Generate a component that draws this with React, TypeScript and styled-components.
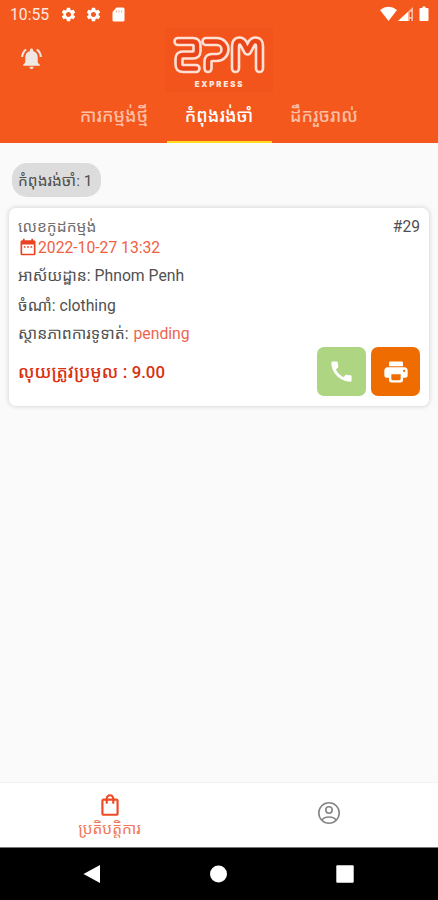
import React from "react";
import styled, { createGlobalStyle, css } from "styled-components";
import {
  MdSettings,
  MdNotificationsActive,
  MdCall,
  MdDateRange,
  MdOutlineShoppingBag,
} from "react-icons/md";

const Global = createGlobalStyle`
  * { box-sizing: border-box; }
  body { margin: 0; background: #fafafa; }
  svg { display: block; flex: none; }
`;

const Screen = styled.div`
  width: 438px;
  height: 900px;
  display: flex;
  flex-direction: column;
  background: #fafafa;
  color: #505050;
  font: 400 15.75px/20px Roboto, "Noto Sans Khmer", "Khmer OS", sans-serif;
  white-space: nowrap;
  overflow: hidden;
`;

const Header = styled.header`
  height: 143px;
  flex: none;
  display: flex;
  flex-direction: column;
  background: #f4581c;
  color: #fff;
`;

const StatusBar = styled.div`
  height: 28px;
  display: flex;
  align-items: center;
  padding: 0 7px 0 10px;
`;

const Clock = styled.span`
  width: 50px;
  padding-top: 1px;
  font-size: 15.7px;
  color: #ffe9e0;
`;

const StatusIcons = styled.div<{ $end?: boolean }>`
  display: flex;
  align-items: center;
  gap: 8px;
  ${(p) => p.$end && css`
    margin-left: auto;
    gap: 0;
  `}
`;

const TitleBar = styled.div`
  height: 64px;
  display: grid;
  grid-template-columns: 165px 108px 1fr;
`;

const BellButton = styled.button`
  border: 0;
  padding: 18px 0 0 19px;
  background: none;
  color: #efe7e4;
  display: flex;
  align-items: flex-start;
`;

const Logo = styled.div`
  height: 64px;
  display: flex;
  flex-direction: column;
  align-items: center;
  background: #f2541b;
`;

const LogoCaption = styled.span`
  margin-top: 2px;
  padding-left: 1px;
  font: 900 7.8px/9px Inter, sans-serif;
  letter-spacing: 1.9px;
  color: #ffe9df;
`;

const Tabs = styled.nav`
  height: 51px;
  display: flex;
  padding-left: 62px;
`;

const Tab = styled.a<{ $active?: boolean }>`
  width: 105px;
  height: 51px;
  padding: 14px 1px 0 0;
  text-align: center;
  font-weight: 500;
  font-size: 17.8px;
  color: ${(p) => (p.$active ? "#fff" : "#fcbfa6")};
  border-bottom: 2px solid ${(p) => (p.$active ? "#ffdc1e" : "transparent")};
`;

const Content = styled.main`
  flex: 1;
  padding: 20px 9px 0;
`;

const Chip = styled.div`
  width: 89px;
  height: 34px;
  margin-left: 3px;
  padding: 8px 0 0 6px;
  border-radius: 15px;
  background: #dcdcdc;
  font-size: 15.5px;
`;

const Card = styled.section`
  height: 198px;
  margin-top: 11px;
  padding: 9px 9px 0;
  border-radius: 7px;
  background: #fff;
  box-shadow: 0 0 4px 1px rgba(0, 0, 0, 0.13);
`;

const Row = styled.div<{ $h: number }>`
  height: ${(p) => p.$h}px;
  display: flex;
  align-items: flex-start;
`;

const CardHead = styled(Row)`
  justify-content: space-between;
  color: #707070;
  font-size: 15.6px;
`;

const OrderNumber = styled.span`
  color: #505050;
`;

const DateRow = styled(Row)`
  color: #f0603f;
  font-size: 15.7px;
  svg { color: #ea4322; }
`;

const DateText = styled.span`
  padding-top: 1px;
`;

const Pending = styled.span`
  margin-left: 5px;
  color: #ee6450;
`;

const CardFoot = styled(Row)`
  justify-content: space-between;
`;

const Total = styled.div`
  padding-top: 15px;
  font-weight: 500;
  font-size: 17.6px;
  color: #d9300f;
`;

const Amount = styled.span`
  font-size: 16.8px;
`;

const Actions = styled.div`
  display: flex;
  gap: 5px;
`;

const Action = styled.button<{ $bg: string }>`
  width: 49px;
  height: 49px;
  padding: 0;
  display: grid;
  place-items: center;
  border: 0;
  border-radius: 7px;
  background: ${(p) => p.$bg};
  color: #fff;
`;

const BottomNav = styled.nav`
  height: 65px;
  flex: none;
  display: grid;
  grid-template-columns: 1fr 1fr;
  border-top: 1px solid #f2f2f2;
  background: #fff;
`;

const NavItem = styled.a<{ $active?: boolean }>`
  display: flex;
  flex-direction: column;
  align-items: center;
  padding-top: ${(p) => (p.$active ? 9 : 17)}px;
  font-size: 15.5px;
  line-height: 20px;
  color: ${(p) => (p.$active ? "#ee4a26" : "#858585")};
`;

const NavLabel = styled.span`
  margin-top: 1px;
  color: #f07858;
`;

const SystemBar = styled.footer`
  height: 53px;
  flex: none;
  display: flex;
  align-items: center;
  gap: 109px;
  padding-left: 83px;
  border-top: 1px solid #777;
  background: #000;
`;

const LETTERS = [
  "M13 13.5H28Q32 13.5 32 17.5V23Q32 27 28 27H18Q14 27 14 31V36.5Q14 40.5 18 40.5H31",
  "M41 13.5H52A8 8 0 0 1 52 29.5H47Q43 29.5 43 33.5V40.5",
  "M70.5 40.5V18Q70.5 13 74.5 13Q77 13 78.5 15.5L82.5 23L86.5 15.5Q88 13 90.5 13Q94.5 13 94.5 18V40.5",
];

function LogoMark() {
  return (
    <svg width="108" height="50" viewBox="0 0 108 50" fill="none" strokeLinecap="round" strokeLinejoin="round">
      {LETTERS.map((d) => (
        <g key={d}>
          <path d={d} stroke="#ffe0d4" strokeWidth="9.6" />
          <path d={d} stroke="#ea4519" strokeWidth="4.4" />
        </g>
      ))}
    </svg>
  );
}

function PrinterIcon() {
  return (
    <svg width="28" height="28" viewBox="0 0 24 24" fill="currentColor">
      <path d="M7 3h10a1 1 0 0 1 1 1v3H6V4a1 1 0 0 1 1-1z" />
      <path fillRule="evenodd" d="M5 8h14a3 3 0 0 1 3 3v4a2 2 0 0 1-2 2h-2v2a2 2 0 0 1-2 2H8a2 2 0 0 1-2-2v-2H4a2 2 0 0 1-2-2v-4a3 3 0 0 1 3-3zm3 6v4a1 1 0 0 0 1 1h6a1 1 0 0 0 1-1v-4zM19 10a1 1 0 1 0 0 2 1 1 0 0 0 0-2z" />
    </svg>
  );
}

function ProfileIcon() {
  return (
    <svg width="26" height="26" viewBox="0 0 26 26" fill="none" stroke="currentColor" strokeWidth="1.6">
      <circle cx="13" cy="13" r="10.2" />
      <circle cx="13" cy="10" r="3.2" />
      <path d="M6 20.3Q7.5 17 13 17T20 20.3" />
    </svg>
  );
}

export default function App() {
  return (
    <Screen>
      <Global />
      <Header>
        <StatusBar>
          <Clock>10:55</Clock>
          <StatusIcons>
            <MdSettings size={17} />
            <MdSettings size={17} />
            <svg width="17" height="17" viewBox="0 0 17 17">
              <path d="M6.5 1.5H13q1.5 0 1.5 1.5v11q0 1.5-1.5 1.5H4q-1.5 0-1.5-1.5V6z" fill="#fff" />
              <path d="M6.5 4.5v2M9 4.5v2M11.5 4.5v2" stroke="#f8a27f" strokeWidth=".9" />
            </svg>
          </StatusIcons>
          <StatusIcons $end>
            <svg width="53" height="16" viewBox="0 0 53 16" fill="#fff">
              <path d="M2 4Q10.5-2.5 19 4L10.5 15z" />
              <path d="M35 1v14H20z" fill="#fbb99d" />
              <path d="M30 6v9H20z" />
              <path d="M32.5 6v5M32.5 13v2" stroke="#e23d0d" strokeWidth="1.5" />
              <path d="M44.500 .5h3V2h2q1 0 1 1v11q0 1-1 1h-7q-1 0-1-1V3q0-1 1-1h2z" />
            </svg>
          </StatusIcons>
        </StatusBar>
        <TitleBar>
          <BellButton><MdNotificationsActive size={25} /></BellButton>
          <Logo>
            <LogoMark />
            <LogoCaption>EXPRESS</LogoCaption>
          </Logo>
        </TitleBar>
        <Tabs>
          <Tab>ការកម្មង់ថ្មី</Tab>
          <Tab $active>កំពុងរង់ចាំ</Tab>
          <Tab>ដឹករួចរាល់</Tab>
        </Tabs>
      </Header>
      <Content>
        <Chip>កំពុងរង់ចាំ: 1</Chip>
        <Card>
          <CardHead $h={20}>
            <span>លេខកូដកម្មង់</span>
            <OrderNumber>#29</OrderNumber>
          </CardHead>
          <DateRow $h={29}>
            <MdDateRange size={20} />
            <DateText>2022-10-27 13:32</DateText>
          </DateRow>
          <Row $h={30}>អាស័យដ្ឋាន: Phnom Penh</Row>
          <Row $h={28}>ចំណាំ: clothing</Row>
          <Row $h={23}>
            ស្ថានភាពការទូទាត់: <Pending>pending</Pending>
          </Row>
          <CardFoot $h={49}>
            <Total>លុយត្រូវប្រមូល : <Amount>9.00</Amount></Total>
            <Actions>
              <Action $bg="#aed581"><MdCall size={27} /></Action>
              <Action $bg="#ef6c00"><PrinterIcon /></Action>
            </Actions>
          </CardFoot>
        </Card>
      </Content>
      <BottomNav>
        <NavItem $active>
          <MdOutlineShoppingBag size={26} />
          <NavLabel>ប្រតិបត្តិការ</NavLabel>
        </NavItem>
        <NavItem>
          <ProfileIcon />
        </NavItem>
      </BottomNav>
      <SystemBar>
        <svg width="18" height="18" viewBox="0 0 18 18" fill="#fff"><path d="M17 0v18L.5 9z" /></svg>
        <svg width="17" height="18" viewBox="0 0 17 18" fill="#fff"><circle cx="8.5" cy="9" r="8.5" /></svg>
        <svg width="18" height="18" viewBox="0 0 18 18" fill="#fff"><rect x=".3" y=".3" width="17.4" height="17.4" rx="1" /></svg>
      </SystemBar>
    </Screen>
  );
}
